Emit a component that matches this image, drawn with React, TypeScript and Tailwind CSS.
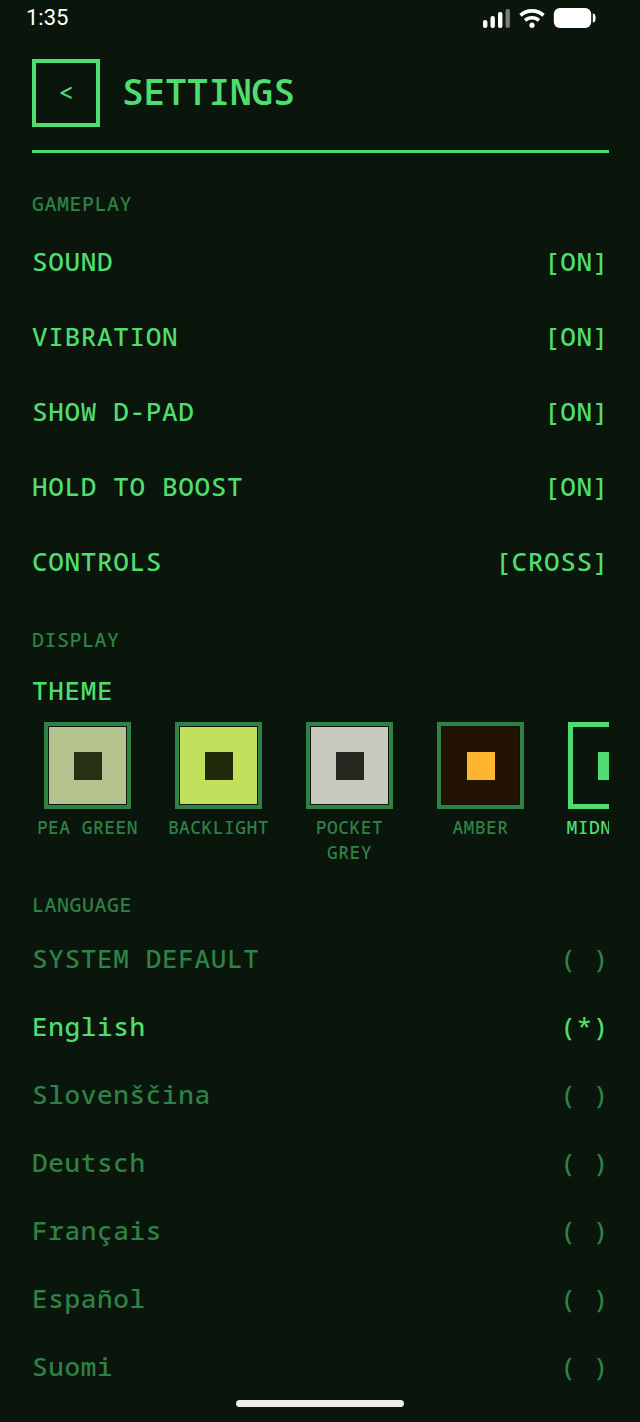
import React, { useState } from "react";

type Theme = {
  id: string;
  name: string;
  bg: string;
  fg: string;
};

const themes: Theme[] = [
  { id: "pea", name: "PEA GREEN", bg: "bg-[#b5c38f]", fg: "bg-[#283014]" },
  { id: "backlight", name: "BACKLIGHT", bg: "bg-[#c3e05c]", fg: "bg-[#20290a]" },
  { id: "pocket", name: "POCKET GREY", bg: "bg-[#c8cabd]", fg: "bg-[#24261f]" },
  { id: "amber", name: "AMBER", bg: "bg-[#221303]", fg: "bg-[#ffb52f]" },
  { id: "midnight", name: "MIDNIGHT", bg: "bg-[#0a150b]", fg: "bg-[#50dd6f]" },
];

const languages = [
  "SYSTEM DEFAULT",
  "English",
  "Slovenščina",
  "Deutsch",
  "Français",
  "Español",
  "Suomi",
];

const toggles = ["SOUND", "VIBRATION", "SHOW D-PAD", "HOLD TO BOOST"];

const StatusBar = () => (
  <div className="flex h-9 items-center justify-between pr-11 pl-[26px] text-white">
    <span className="font-[Roboto,sans-serif] text-[22px] leading-9 font-normal">1:35</span>
    <div className="flex items-center gap-2">
      <svg width="28" height="20" viewBox="0 0 28 20" fill="currentColor" aria-hidden="true">
        <rect x="0" y="12" width="4.4" height="8" rx="2" />
        <rect x="7.5" y="8" width="4.4" height="12" rx="2" />
        <rect x="15" y="4" width="4.4" height="16" rx="2" />
        <rect x="22.5" y="1" width="4.4" height="19" rx="2" opacity="0.45" />
      </svg>
      <svg width="26" height="20" viewBox="0 0 26 20" fill="none" stroke="currentColor" strokeWidth="3.6" aria-hidden="true">
        <path d="M1.5 7.4C8 1.4 18 1.4 24.5 7.4" />
        <path d="M6 12.4C10 8.8 16 8.8 20 12.4" />
        <circle cx="13" cy="17.2" r="2.6" fill="currentColor" stroke="none" />
      </svg>
      <svg width="43" height="20" viewBox="0 0 43 20" fill="currentColor" aria-hidden="true">
        <rect x="0.8" y="0" width="37.4" height="20" rx="6" />
        <path d="M39.8 5.5c1.8 0 2.8 1.4 2.8 4.5s-1 4.5-2.8 4.5z" />
      </svg>
    </div>
  </div>
);

const SectionTitle = ({ children }: { children: React.ReactNode }) => (
  <h2 className="text-[20px] leading-6 tracking-wide text-[#2f8145]">{children}</h2>
);

const SettingRow = ({
  label,
  value,
  checked,
  onClick,
}: {
  label: string;
  value: string;
  checked?: boolean;
  onClick: () => void;
}) => (
  <button
    type="button"
    role={checked === undefined ? undefined : "switch"}
    aria-checked={checked}
    onClick={onClick}
    className="flex h-[75px] w-full items-center justify-between text-[26px] leading-8 tracking-wide"
  >
    <span>{label}</span>
    <span>[{value}]</span>
  </button>
);

const App = () => {
  const [enabled, setEnabled] = useState<Record<string, boolean>>({
    SOUND: true,
    VIBRATION: true,
    "SHOW D-PAD": true,
    "HOLD TO BOOST": true,
  });
  const [controls, setControls] = useState("CROSS");
  const [theme, setTheme] = useState("midnight");
  const [language, setLanguage] = useState("English");

  return (
    <div className="min-h-screen bg-[#0a150b] pb-5 font-['Droid_Sans_Mono','Noto_Sans_Mono','DejaVu_Sans_Mono',monospace] font-medium text-[#50dd6f]">
      <StatusBar />
      <main className="pt-[23px] pr-[31px] pl-8">
        <header className="flex items-center gap-[22px] border-b-3 border-[#50dd6f] pb-[23px]">
          <button
            type="button"
            aria-label="Back"
            className="flex size-[68px] items-center justify-center border-4 border-[#50dd6f] pb-0.5 text-[26px] leading-8"
          >
            &lt;
          </button>
          <h1 className="pb-0.5 text-[36px] leading-10 font-semibold">SETTINGS</h1>
        </header>

        <section className="pt-[39px]">
          <SectionTitle>GAMEPLAY</SectionTitle>
          <div className="pt-[7px]">
            {toggles.map((name) => (
              <SettingRow
                key={name}
                label={name}
                value={enabled[name] ? "ON" : "OFF"}
                checked={enabled[name]}
                onClick={() =>
                  setEnabled((prev) => ({ ...prev, [name]: !prev[name] }))
                }
              />
            ))}
            <SettingRow
              label="CONTROLS"
              value={controls}
              onClick={() => setControls(controls === "CROSS" ? "SWIPE" : "CROSS")}
            />
          </div>
        </section>

        <section className="pt-[30px]">
          <SectionTitle>DISPLAY</SectionTitle>
          <h3 className="pt-[22px] text-[26px] leading-8 tracking-wide">THEME</h3>
          <div className="flex gap-5 overflow-x-auto pt-4 [scrollbar-width:none]">
            {themes.map(({ id, name, bg, fg }) => (
              <button
                key={id}
                type="button"
                aria-pressed={theme === id}
                onClick={() => setTheme(id)}
                className={`flex w-[111px] shrink-0 flex-col items-center gap-1.5 ${
                  theme === id ? "text-[#50dd6f]" : "text-[#2f8145]"
                }`}
              >
                <span
                  className={`flex size-[87px] border-current ${
                    theme === id ? "border-5" : "border-4 p-px"
                  }`}
                >
                  <span className={`flex flex-1 items-center justify-center ${bg}`}>
                    <span className={`size-7 ${fg}`} />
                  </span>
                </span>
                <span className="text-[18px] leading-[25px] tracking-wide">{name}</span>
              </button>
            ))}
          </div>
        </section>

        <section className="pt-7">
          <SectionTitle>LANGUAGE</SectionTitle>
          <div className="pt-[7px]">
            {languages.map((name) => (
              <label
                key={name}
                className={`relative flex h-[68px] cursor-pointer items-center justify-between text-[26px] leading-8 tracking-wide ${
                  language === name ? "" : "text-[#2f8145]"
                }`}
              >
                <input
                  type="radio"
                  name="language"
                  value={name}
                  checked={language === name}
                  onChange={() => setLanguage(name)}
                  className="sr-only"
                />
                <span>{name}</span>
                <span aria-hidden="true" className="whitespace-pre">
                  {language === name ? "(*)" : "( )"}
                </span>
              </label>
            ))}
          </div>
        </section>
      </main>
      <div className="fixed bottom-[15px] left-1/2 h-[7px] w-[168px] -translate-x-1/2 rounded-full bg-[#e9eeea]" />
    </div>
  );
};

export default App;
